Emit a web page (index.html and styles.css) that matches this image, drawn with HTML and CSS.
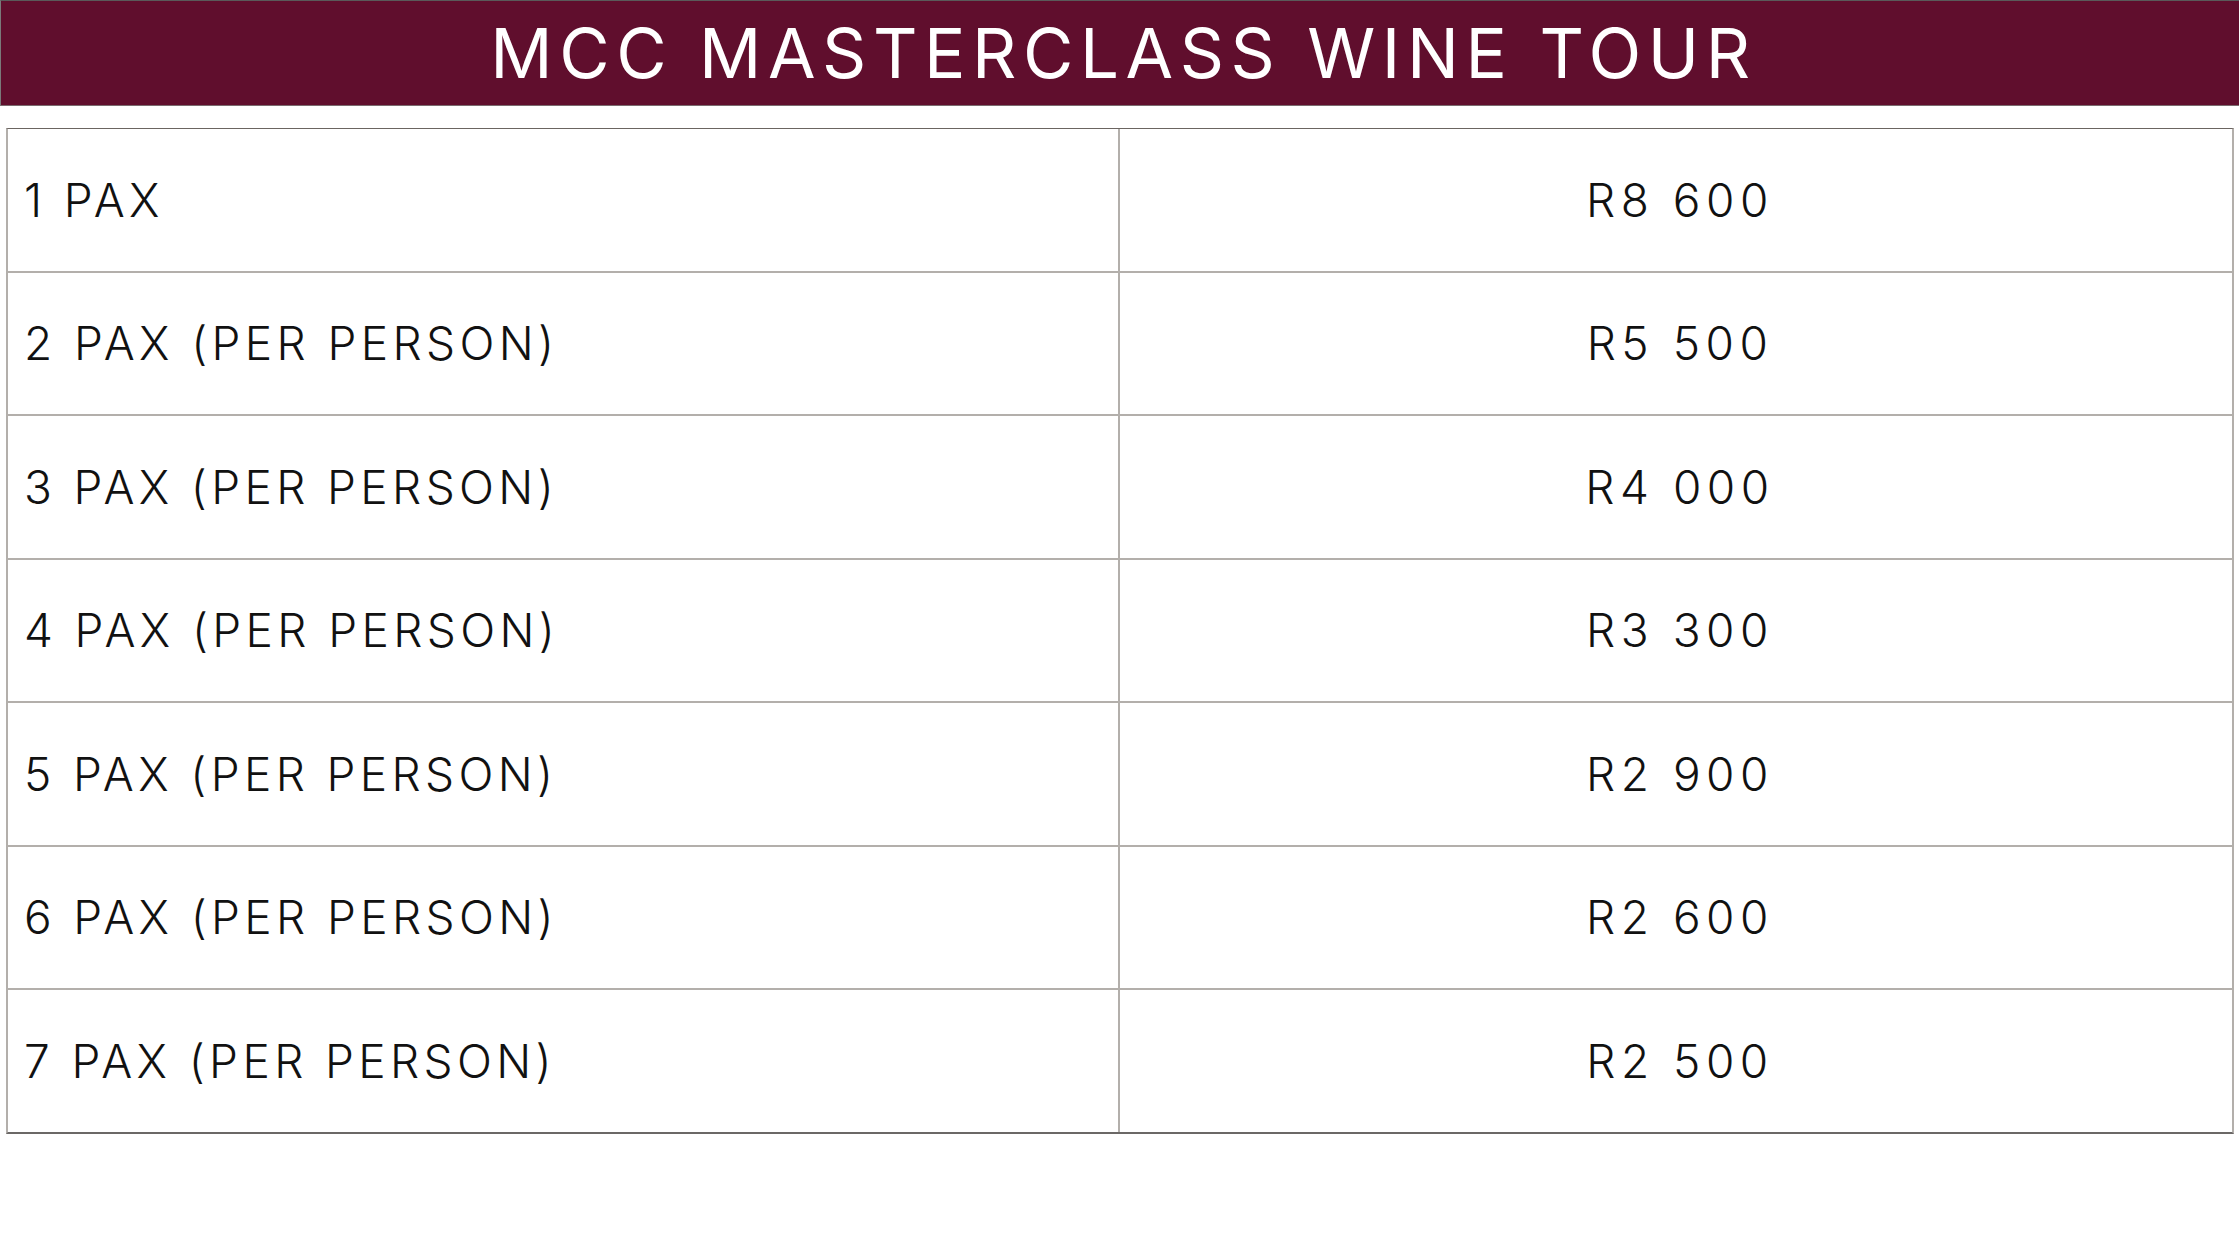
FILE: index.html
```html
<!DOCTYPE html>
<html lang="en">
<head>
<meta charset="utf-8">
<title>MCC Masterclass Wine Tour</title>
<link rel="stylesheet" href="styles.css">
</head>
<body>
<header class="banner"><h1 class="banner-title">MCC MASTERCLASS WINE TOUR</h1></header>
<div class="price-table">
  <div class="row"><div class="cell label">1 PAX</div><div class="cell price">R8 600</div></div>
  <div class="row"><div class="cell label">2 PAX (PER PERSON)</div><div class="cell price">R5 500</div></div>
  <div class="row"><div class="cell label">3 PAX (PER PERSON)</div><div class="cell price">R4 000</div></div>
  <div class="row"><div class="cell label">4 PAX (PER PERSON)</div><div class="cell price">R3 300</div></div>
  <div class="row"><div class="cell label">5 PAX (PER PERSON)</div><div class="cell price">R2 900</div></div>
  <div class="row"><div class="cell label">6 PAX (PER PERSON)</div><div class="cell price">R2 600</div></div>
  <div class="row"><div class="cell label">7 PAX (PER PERSON)</div><div class="cell price">R2 500</div></div>
</div>
</body>
</html>
```
FILE: styles.css
```css
html, body {
  margin: 0;
  padding: 0;
  background: #ffffff;
}
body {
  width: 2240px;
  height: 1260px;
  font-family: "Inter", "Roboto", "Liberation Sans", sans-serif;
  color: #111111;
}
.banner {
  box-sizing: border-box;
  width: 2239px;
  height: 106px;
  background: #600e2d;
  border-top: 1px solid #5a5a5a;
  border-left: 1px solid #7a7a7a;
  border-bottom: 1px solid #7a6a6e;
  display: flex;
  align-items: center;
  justify-content: center;
}
.banner-title {
  margin: 0;
  padding-left: 7px;
  font-weight: 400;
  font-size: 69px;
  line-height: 1;
  letter-spacing: 0.095em;
  color: #ffffff;
}
.price-table {
  box-sizing: border-box;
  margin: 22px 0 0 6px;
  width: 2228px;
  border-top: 1px solid #6b6561;
  border-bottom: 2px solid #6b6866;
  border-left: 2px solid #b3afab;
  border-right: 2px solid #b3afab;
  display: flex;
  flex-direction: column;
}
.row {
  display: grid;
  grid-template-columns: 1112px 1fr;
  height: 143.5px;
  box-sizing: border-box;
  border-bottom: 2px solid #b3afab;
}
.row:last-child {
  border-bottom: none;
  height: 142px;
}
.cell {
  display: flex;
  align-items: center;
  font-weight: 300;
  font-size: 46px;
}
.label {
  padding-left: 16px;
  letter-spacing: 0.095em;
  border-right: 2px solid #b3afab;
}
.price {
  justify-content: center;
  padding-left: 8px;
  letter-spacing: 0.12em;
}
```
